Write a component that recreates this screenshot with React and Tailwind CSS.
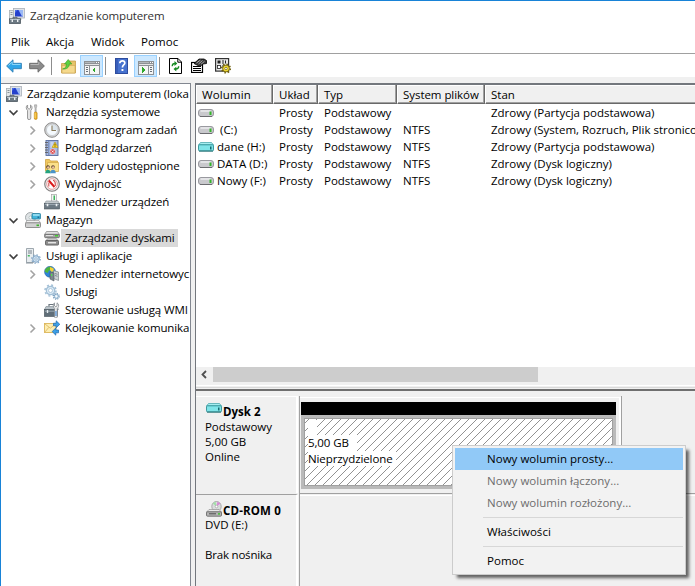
function ComputerIcon() {
  return (
    <svg width="16" height="16" viewBox="0 0 16 16" className="shrink-0">
      <rect x=".5" y="2.500" width="5" height="9" fill="#e2e6e8" stroke="#a7aeb3" strokeWidth=".8" />
      <path d="M1.500 4.500h2M1.500 6.500h2" stroke="#7f898f" strokeWidth=".9" />
      <rect x="4.500" y=".5" width="11" height="9.500" fill="#dfe3e8" stroke="#aab0b8" strokeWidth=".8" />
      <rect x="6" y="2" width="8" height="6.500" fill="#2440cc" />
      <path d="M9.500 2H14v6.500h-1z" fill="#9ab8f5" />
      <path d="M6 2h2.500L6 5z" fill="#4a6ee8" />
      <path d="M8.500 10h3.500l1 1.500H8z" fill="#b3babf" />
      <path d="M4 10.500V9.300h4v1.200" fill="none" stroke="#59656e" />
      <rect x=".5" y="10.800" width="11" height="4.700" fill="#6c7983" stroke="#4c5860" strokeWidth=".8" />
      <path d="M1 11.500h10" stroke="#b2bec6" />
      <path d="M3.300 11.500v2.500M8.700 11.500v2.500" stroke="#edf1f3" strokeWidth="1.400" />
    </svg>
  )
}

function ToolsIcon() {
  return (
    <svg width="16" height="16" viewBox="0 0 16 16">
      <path d="M2.600 1v3l1.500 1.200L5.500 4V1C7 1.800 7.400 3.500 6.800 5L5.800 6.500V14a1.600 1.600 0 0 1-3.300 0V6.500C1 5 .6 2.200 2.600 1z" fill="#e4e4e4" stroke="#858585" strokeWidth=".8" />
      <path d="M9.500.8h2.200v2L11.200 4v4.500H10V4l-.5-1.200z" fill="#c2c2c2" stroke="#8d8d8d" strokeWidth=".5" />
      <rect x="9.300" y="8" width="2.800" height="7.400" rx="1.200" fill="#f0b429" stroke="#b47c10" strokeWidth=".6" />
      <path d="M10.100 9v5" stroke="#ffe28a" strokeWidth=".7" />
    </svg>
  )
}

function ClockIcon() {
  return (
    <svg width="16" height="16" viewBox="0 0 16 16">
      <circle cx="8" cy="8" r="7.300" fill="#d4d4d4" stroke="#8c8c8c" strokeWidth="1" />
      <circle cx="8" cy="8" r="5.500" fill="#f4f9fd" stroke="#b4bbc0" strokeWidth=".5" />
      <path d="M8 8V2.600A5.400 5.400 0 0 1 13.400 8z" fill="#dbe5ec" />
      <path d="M8 3.500v5h4" fill="none" stroke="#8a7a58" strokeWidth="1.100" />
    </svg>
  )
}

function EventIcon() {
  return (
    <svg width="16" height="16" viewBox="0 0 16 16">
      <rect x="2" y=".5" width="12" height="15" fill="#a9bbe0" stroke="#5a6e9f" strokeWidth=".9" />
      <path d="M4.800 1v14" stroke="#6d82b6" />
      <path d="M1 2.500h3M1 5h3M1 7.500h3M1 10h3M1 12.500h3" stroke="#606060" strokeWidth=".9" />
      <path d="M6.500 3h3M6.500 5h2.500M6.500 7h2" stroke="#e6edfb" />
      <path d="M11 2l3 5.500H8z" fill="#ffd92e" stroke="#b08d0a" strokeWidth=".5" />
      <path d="M11 3.700v2M11 6.200v.7" stroke="#5b4700" strokeWidth=".9" />
      <circle cx="8.700" cy="11.500" r="2.700" fill="#d9474c" stroke="#fff" strokeWidth=".5" />
      <path d="M7.700 10.500l2 2M9.700 10.500l-2 2" stroke="#fff" strokeWidth=".9" />
    </svg>
  )
}

function SharedFolderIcon() {
  return (
    <svg width="16" height="16" viewBox="0 0 16 16">
      <path d="M1.500 1.500h4l1 1.500h7v10h-12z" fill="#f0c961" stroke="#cfa245" strokeWidth=".8" />
      <path d="M3.500 4.500h11v9h-11z" fill="#fbe08a" stroke="#d1a748" strokeWidth=".7" />
      <circle cx="4" cy="9" r="1.800" fill="#4a3a2c" />
      <circle cx="9" cy="9" r="1.800" fill="#5a4232" />
      <circle cx="4.200" cy="9.500" r="1.200" fill="#edc19c" />
      <circle cx="9.200" cy="9.500" r="1.200" fill="#edc19c" />
      <path d="M1.200 15.200c0-4.500 5.400-4.500 5.400 0z" fill="#25a37f" />
      <path d="M6.200 15.200c0-4.500 5.600-4.500 5.600 0z" fill="#4b93c8" />
    </svg>
  )
}

function GaugeIcon() {
  return (
    <svg width="16" height="16" viewBox="0 0 16 16">
      <circle cx="8" cy="8" r="7.300" fill="#eee" stroke="#807d7d" strokeWidth="1.100" />
      <circle cx="8" cy="8" r="5.300" fill="#fff" stroke="#e08a8a" strokeWidth=".8" />
      <path d="M4.800 10.500V6.500M9 4.300c1.600.3 2.300 1.800 2.300 3.700v2" fill="none" stroke="#d05050" strokeWidth="1.100" />
      <path d="M4.800 4.500l5.700 6.500" stroke="#db1b1b" strokeWidth="2" />
    </svg>
  )
}

function DeviceIcon() {
  return (
    <svg width="16" height="16" viewBox="0 0 16 16">
      <rect x="7.500" y=".5" width="5" height="7" fill="#f5f5f5" stroke="#a4a4a4" strokeWidth=".7" />
      <rect x="9.500" y="1.500" width="1.500" height="4.500" fill="#3cb45c" />
      <path d="M2 7h12l1.500 2.500H.5z" fill="#c4cace" stroke="#8a9298" strokeWidth=".6" />
      <rect x=".4" y="9.500" width="15.200" height="5.500" fill="#6b7882" stroke="#4a555d" strokeWidth=".6" />
      <path d="M1 10.300h14" stroke="#a4b0b9" />
      <path d="M3.500 9.800v2.500M12.500 9.800v2.500" stroke="#eef2f4" strokeWidth="1.600" />
    </svg>
  )
}

function StorageIcon() {
  return (
    <svg width="16" height="16" viewBox="0 0 16 16">
      <circle cx="5.500" cy="5.500" r="5" fill="#dfe3e5" stroke="#909799" strokeWidth=".8" />
      <circle cx="5.500" cy="5.500" r="1.500" fill="#fff" stroke="#9aa" strokeWidth=".6" />
      <rect x="7" y="1.500" width="8.600" height="5.500" rx="1" fill="#44b7dc" stroke="#237b9b" strokeWidth=".8" />
      <path d="M8 3h6.500" stroke="#c2f0fb" strokeWidth="1.200" />
      <rect x="12.500" y="4.600" width="1.800" height="1.200" fill="#1f577f" />
      <path d="M2 8.500h12l1.500 2.500H.5z" fill="#f0f0f0" stroke="#8f8f8f" strokeWidth=".6" />
      <rect x=".5" y="10.800" width="15" height="4.700" rx="1" fill="#d0d0d0" stroke="#7a7a7a" strokeWidth=".8" />
      <rect x="11.500" y="12.500" width="2.500" height="1.600" fill="#3cb32d" />
    </svg>
  )
}

function DiskManagementIcon() {
  return (
    <svg width="16" height="16" viewBox="0 0 16 16">
      <path d="M2.500 1.500h11l2 3H.5z" fill="#e2e2e2" stroke="#808080" strokeWidth=".7" />
      <rect x=".6" y="4.300" width="14.800" height="3.400" rx="1" fill="#a4a4a4" stroke="#626262" strokeWidth=".8" />
      <path d="M2 5.500h7" stroke="#e6e6e6" strokeWidth=".9" />
      <rect x="11" y="5" width="3" height="1.500" fill="#43cf31" />
      <path d="M3.500 8.800h9l1.500 2H2z" fill="#dedede" stroke="#7a7a7a" strokeWidth=".7" />
      <rect x="1.500" y="10.500" width="13" height="4.600" rx=".8" fill="#8e8e8e" stroke="#565656" strokeWidth=".8" />
      <rect x="4" y="12" width="8" height="1.400" fill="#e6e6e6" />
    </svg>
  )
}

function ServicesAppsIcon() {
  return (
    <svg width="16" height="16" viewBox="0 0 16 16">
      <path d="M1.500.5h7v14h-7z" fill="#e7ecef" stroke="#89949c" strokeWidth=".8" />
      <path d="M3 3h4M3 5h4" stroke="#6f7c85" strokeWidth=".9" />
      <rect x="2.800" y="7" width="2" height="1.500" fill="#43b65c" />
      <path d="M1 15h7" stroke="#89949c" />
      <circle cx="11" cy="11" r="3.300" fill="#cfe3f3" stroke="#7fa3c4" strokeWidth="1" />
      <circle cx="11" cy="11" r="4.300" fill="none" stroke="#7fa3c4" strokeWidth="1.100" strokeDasharray="1.500 1.870" />
      <circle cx="11" cy="11" r="1.200" fill="#fff" stroke="#7fa3c4" strokeWidth=".7" />
    </svg>
  )
}

function IisIcon() {
  return (
    <svg width="16" height="16" viewBox="0 0 16 16">
      <circle cx="6" cy="5.800" r="5.500" fill="#2d84d8" stroke="#22588f" strokeWidth=".5" />
      <path d="M1 4c1.500-3 5-3.500 6.500-3L6.500 4 4.500 5 4 7 1 6z" fill="#4eb53c" />
      <path d="M6 1l3.500 1.200L10 5 7.500 6 6 4z" fill="#f2d334" />
      <path d="M9.500 4.500l5 1.500v8.500l-5-2z" fill="#ccd1d4" stroke="#7b8388" strokeWidth=".7" />
      <path d="M6 5.800l4 1.200v8l-4-2z" fill="#7d888f" stroke="#4f585e" strokeWidth=".6" />
      <path d="M11 7.500l2.500.8M11 9.500l2.500.8" stroke="#6c767d" strokeWidth=".8" />
      <rect x="7" y="8" width="1.200" height="2" fill="#4ee04e" />
    </svg>
  )
}

function GearsIcon() {
  return (
    <svg width="16" height="16" viewBox="0 0 16 16">
      <circle cx="6.500" cy="6.500" r="4.200" fill="#dcebf6" stroke="#a2bfd6" strokeWidth="1.200" />
      <circle cx="6.500" cy="6.500" r="5.500" fill="none" stroke="#a2bfd6" strokeWidth="1.500" strokeDasharray="2 2.320" />
      <circle cx="6.500" cy="6.500" r="2" fill="#fff" stroke="#a2bfd6" strokeWidth=".8" />
      <circle cx="12.300" cy="12.300" r="2.100" fill="#d8e9f5" stroke="#7ba0c0" strokeWidth=".9" />
      <circle cx="12.300" cy="12.300" r="3" fill="none" stroke="#7ba0c0" strokeWidth="1.100" strokeDasharray="1.200 1.160" />
      <circle cx="12.300" cy="12.300" r=".7" fill="#fff" />
    </svg>
  )
}

function WmiIcon() {
  return (
    <svg width="16" height="16" viewBox="0 0 16 16">
      <path d="M5 4.500v-2h5v2" fill="none" stroke="#6a757d" strokeWidth="1.200" />
      <path d="M2 4.500h11l1.500 3H.5z" fill="#b8c1c7" stroke="#7b868d" strokeWidth=".6" />
      <rect x=".4" y="7.500" width="13" height="7" fill="#606e78" stroke="#46525a" strokeWidth=".6" />
      <path d="M1 9.200h12" stroke="#9caab4" />
      <path d="M3.500 8v3" stroke="#e6ecef" strokeWidth="1.400" />
      <path d="M10.500.8v3l1.300 1L13 3.800v-3c1.800 1 2.200 3.200 1 4.800l-.8.900v8.300a1.300 1.300 0 0 1-2.600 0V6.500C8.800 5 8.800 2 10.500.8z" fill="#eee" stroke="#7b8388" strokeWidth=".7" />
      <rect x="11.300" y="9" width="1.300" height="5" fill="#5a96d8" />
    </svg>
  )
}

function QueueIcon() {
  return (
    <svg width="16" height="16" viewBox="0 0 16 16">
      <rect x=".5" y="3.500" width="11.500" height="9" fill="#fdeeb2" stroke="#dcb55a" strokeWidth=".9" />
      <path d="M.8 3.800l5.500 4.400 5.500-4.400M.8 12.200l4-4.800" fill="none" stroke="#dcb55a" strokeWidth=".8" />
      <path d="M9.500 3.200h2.700V.8l3.600 3.500-3.600 3.500V5.800H9.500z" fill="#3ca0e8" stroke="#1967ad" strokeWidth=".7" />
      <path d="M14.500 10h-2.700V7.900l-3.600 3.700 3.600 3.600v-2.400h2.700z" fill="#3ca0e8" stroke="#1967ad" strokeWidth=".7" />
    </svg>
  )
}

function DriveIcon({ teal }) {
  if (teal) {
    return (
      <svg width="16" height="10" viewBox="0 0 16 10" className="shrink-0">
        <path d="M2.500.5h11l2 2.500H.5z" fill="#a6eef0" stroke="#3d9fa5" strokeWidth=".7" />
        <rect x=".5" y="2.800" width="15" height="6" rx="1" fill="#7fe4e8" stroke="#2f8e94" strokeWidth=".9" />
        <path d="M1 9.200h14" stroke="#17666b" strokeWidth=".8" />
        <rect x="12" y="4.500" width="1.500" height="3" fill="#176a70" />
      </svg>
    )
  }
  return (
    <svg width="16" height="10" viewBox="0 0 16 10" className="shrink-0">
      <rect x=".5" y="1.500" width="15" height="7" rx="2.500" fill="#c9c9cd" stroke="#909096" strokeWidth=".9" />
      <path d="M2.500 3h10" stroke="#f5f5f7" strokeWidth="1.200" />
      <path d="M2 8.500h12" stroke="#66666b" strokeWidth=".9" />
      <rect x="11.500" y="3.500" width="2" height="3.500" fill="#34b52a" />
    </svg>
  )
}

function CdIcon() {
  return (
    <svg width="16" height="16" viewBox="0 0 16 16">
      <ellipse cx="10.500" cy="5.500" rx="4.700" ry="5" fill="#d9dcdd" stroke="#9b9b9b" strokeWidth=".8" />
      <path d="M10.500 5.500l1-4.800 3 1.800z" fill="#d986d6" />
      <path d="M10.500 5.500l-3.600-3 2.500-1.700z" fill="#9fe0a4" />
      <circle cx="10.500" cy="5.500" r="1.300" fill="#fff" stroke="#888" strokeWidth=".5" />
      <path d="M3 8.500h10l2.500 2.500H.5z" fill="#e8e8e8" stroke="#868686" strokeWidth=".6" />
      <rect x=".5" y="10.800" width="15" height="4.400" rx="1" fill="#b4b4b4" stroke="#5e5e5e" strokeWidth=".8" />
      <path d="M3 12.800h7" stroke="#4f4f4f" />
      <rect x="12" y="12.200" width="2" height="1.400" fill="#3cc02f" />
    </svg>
  )
}

function Arrow({ right }) {
  return (
    <svg width="16" height="14" viewBox="0 0 16 14">
      {right
        ? <path d="M15.400 7L9 .8v3.500H.6v5.400H9v3.500z" fill="#8b8b8b" stroke="#666" strokeWidth=".9" />
        : <path d="M.6 7L7 .8v3.500h8.400v5.400H7v3.500z" fill="#2fa5e8" stroke="#2f7fb5" strokeWidth=".9" />}
      {right
        ? <path d="M1.500 5.500h8.300V3" fill="none" stroke="#b9b9b9" />
        : <path d="M2.500 6.500L6.200 3v2.500h8.300" fill="none" stroke="#8ad6f9" />}
    </svg>
  )
}

function UpFolderIcon() {
  return (
    <svg width="15" height="16" viewBox="0 0 15 16">
      <path d="M.5 5.500h6l1.500-2.500h6.500v12H.5z" fill="#e6c468" stroke="#c9a04a" strokeWidth=".8" />
      <path d="M1 7.500h13v7.500H1z" fill="#f5d98c" stroke="#cfa955" strokeWidth=".6" />
      <path d="M1.500 11c3-.5 4-2.500 3.900-5H3.500L7.200 1.500 10.800 6H8.300c0 3.500-2.800 5.500-6.800 5z" fill="#5bd03f" stroke="#3a9a28" strokeWidth=".6" />
    </svg>
  )
}

function PaneIcon({ right }) {
  return (
    <svg width="16" height="14" viewBox="0 0 16 14" shapeRendering="crispEdges">
      <rect width="16" height="14" fill="#8d9195" />
      <rect x="1" y="1" width="10" height="1" fill="#b4b8bb" />
      <rect x="12" y="1" width="1" height="1" fill="#fff" />
      <rect x="14" y="1" width="1" height="1" fill="#fff" />
      <rect x="1" y="3" width="14" height="1" fill="#e4e4e4" />
      <rect x="1" y="5" width={right ? 9 : 4} height="8" fill="#f6f6f6" />
      <rect x={right ? 11 : 6} y="5" width={right ? 4 : 9} height="8" fill="#f6f6f6" />
      <path d={right ? 'M12 6h2v1h-2zM12 8h2v1h-2zM12 10h2v1h-2z' : 'M2 6h2v1H2zM2 8h2v1H2zM2 10h2v1H2z'} fill="#687078" />
      <path d={right ? 'M4 6l3 3-3 3z' : 'M11 6L8 9l3 3z'} fill="#2fa82c" />
    </svg>
  )
}

function HelpIcon() {
  return (
    <svg width="13" height="16" viewBox="0 0 13 16">
      <rect x=".5" y=".5" width="12" height="15" fill="#4672cf" stroke="#2d4c9e" />
      <path d="M2 1v14" stroke="#2a4aa5" />
      <path d="M4.800 5.200c0-3.200 5-3 5-.2 0 2-2.400 2-2.400 4.400" fill="none" stroke="#fff" strokeWidth="1.700" />
      <rect x="6.500" y="11" width="1.900" height="2" fill="#fff" />
    </svg>
  )
}

function RefreshIcon() {
  return (
    <svg width="13" height="16" viewBox="0 0 13 16">
      <path d="M.5.500h8.500l3.500 3.500v11.500H.5z" fill="#fff" stroke="#000" />
      <path d="M8.800.500v3.700h3.700" fill="none" stroke="#000" />
      <path d="M3.200 8.200c0-2 .8-2.700 2.800-2.700" fill="none" stroke="#168a22" strokeWidth="1.300" />
      <path d="M5.500 3l2.800 2.500L5.500 8zM7.300 8.700l-2.800 2.300 2.800 2.500z" fill="#168a22" />
      <path d="M9.700 8.200c0 2-.8 2.800-2.800 2.800" fill="none" stroke="#168a22" strokeWidth="1.300" />
    </svg>
  )
}

function PropertiesIcon() {
  return (
    <svg width="16" height="15" viewBox="0 0 16 15">
      <rect x=".5" y="4.500" width="11" height="10" fill="#fff" stroke="#000" strokeWidth="1.200" />
      <path d="M2 8.500h8M2 10.500h8M2 12.500h8" stroke="#000" strokeWidth="1.100" />
      <path d="M3 5.500L8 1h5l2.500 1.500v3L12 6l-3 2.500L6 7z" fill="#3a3a3a" stroke="#000" strokeWidth=".8" />
      <path d="M5.500 5l4-3M7.500 6l4-3.500M10 6.300l3.500-3" stroke="#d6d6d6" strokeWidth=".7" />
    </svg>
  )
}

function SettingsIcon() {
  return (
    <svg width="17" height="16" viewBox="0 0 17 16">
      <rect x=".6" y=".6" width="13" height="12.500" fill="#e9e9e9" stroke="#333" strokeWidth="1.200" />
      <rect x="2.500" y="2.500" width="3" height="3" fill="#222" />
      <rect x="2.500" y="7.500" width="3" height="3" fill="#fff" stroke="#222" strokeWidth=".8" />
      <path d="M7 3h2M10.500 2.500v3M7 5h2M7 8h2" stroke="#222" />
      <circle cx="11" cy="10.500" r="3.400" fill="#f0da36" stroke="#574800" strokeWidth=".7" />
      <circle cx="11" cy="10.500" r="4.300" fill="none" stroke="#6b5b06" strokeWidth="1.500" strokeDasharray="1.500 1.870" />
      <circle cx="11" cy="10.500" r="1.200" fill="#fff" stroke="#574800" strokeWidth=".6" />
    </svg>
  )
}

function Chevron({ open }) {
  return (
    <svg width="11" height="11" viewBox="0 0 11 11" className="shrink-0">
      {open
        ? <path d="M1.500 3.500l4 4 4-4" fill="none" stroke="#404040" strokeWidth="1.700" />
        : <path d="M3.500 1.500l4 4-4 4" fill="none" stroke="#a3a3a3" strokeWidth="1.600" />}
    </svg>
  )
}

const tree = [
  { label: 'Narzędzia systemowe', level: 1, open: true, icon: ToolsIcon },
  { label: 'Harmonogram zadań', level: 2, arrow: true, icon: ClockIcon },
  { label: 'Podgląd zdarzeń', level: 2, arrow: true, icon: EventIcon },
  { label: 'Foldery udostępnione', level: 2, arrow: true, icon: SharedFolderIcon },
  { label: 'Wydajność', level: 2, arrow: true, icon: GaugeIcon },
  { label: 'Menedżer urządzeń', level: 2, icon: DeviceIcon },
  { label: 'Magazyn', level: 1, open: true, icon: StorageIcon },
  { label: 'Zarządzanie dyskami', level: 2, selected: true, icon: DiskManagementIcon },
  { label: 'Usługi i aplikacje', level: 1, open: true, icon: ServicesAppsIcon },
  { label: 'Menedżer internetowyc', level: 2, arrow: true, icon: IisIcon },
  { label: 'Usługi', level: 2, icon: GearsIcon },
  { label: 'Sterowanie usługą WMI', level: 2, icon: WmiIcon },
  { label: 'Kolejkowanie komunika', level: 2, arrow: true, icon: QueueIcon },
]

const volumes = [
  { name: '', fs: '', status: 'Zdrowy (Partycja podstawowa)' },
  { name: '\u00a0(C:)', fs: 'NTFS', status: 'Zdrowy (System, Rozruch, Plik stronico' },
  { name: 'dane (H:)', fs: 'NTFS', status: 'Zdrowy (Partycja podstawowa)', teal: true },
  { name: 'DATA (D:)', fs: 'NTFS', status: 'Zdrowy (Dysk logiczny)' },
  { name: 'Nowy (F:)', fs: 'NTFS', status: 'Zdrowy (Dysk logiczny)' },
]

function TreeRow({ item }) {
  const Icon = item.icon
  return (
    <div className={item.level === 1 ? 'flex h-[18px] items-center pl-[7px]' : 'flex h-[18px] items-center pl-[26px]'}>
      <span className="w-[17px] shrink-0">
        {(item.open || item.arrow) && <Chevron open={item.open} />}
      </span>
      <span className="shrink-0"><Icon /></span>
      <span className={item.selected ? 'ml-px h-[18px] bg-[#d9d9d9] pl-1 pr-1' : 'pl-[5px]'}>{item.label}</span>
    </div>
  )
}

function HeaderCell({ className, children }) {
  return (
    <div className={`h-[19px] shrink-0 border-b border-l border-r border-b-[#696969] border-l-white border-r-[#696969] pl-[5px] shadow-[inset_-1px_-1px_0_#a0a0a0,inset_0_1px_0_#fff] leading-[19px] ${className}`}>
      {children}
    </div>
  )
}

function VolumeList() {
  return (
    <div className="h-[282px] shrink-0 overflow-hidden bg-white">
      <div className="flex bg-[#f0f0f0]">
        <HeaderCell className="w-[77px] tracking-[0.1px]">Wolumin</HeaderCell>
        <HeaderCell className="w-[45px]">Układ</HeaderCell>
        <HeaderCell className="w-[79px]">Typ</HeaderCell>
        <HeaderCell className="w-[88px] tracking-[-0.05px]">System plików</HeaderCell>
        <HeaderCell className="w-[240px]">Stan</HeaderCell>
      </div>
      {volumes.map((v, i) => (
        <div key={i} className="flex h-[17px] items-center whitespace-nowrap leading-[17px]">
          <span className="flex w-[83px] shrink-0 items-center gap-[3px] pl-[2px]">
            <DriveIcon teal={v.teal} />
            <span>{v.name}</span>
          </span>
          <span className="w-[45px] shrink-0">Prosty</span>
          <span className="w-[79px] shrink-0">Podstawowy</span>
          <span className="w-[88px] shrink-0">{v.fs}</span>
          <span>{v.status}</span>
        </div>
      ))}
    </div>
  )
}

function DiskGraph() {
  return (
    <div className="flex h-[97px] shrink-0">
      <div className="w-[102px] border-r-2 border-t border-white pl-[9px] pt-[6px] leading-[15px]">
        <div className="flex h-[15px] items-start pl-px">
          <DriveIcon teal />
          <b className="pl-px pt-px">Dysk 2</b>
        </div>
        <div className="pt-px tracking-[-0.05px]">
          <p>Podstawowy</p>
          <p>5,00 GB</p>
          <p>Online</p>
        </div>
      </div>
      <div className="ml-px w-[323px] border-l border-r border-[#a0a0a0] pt-px">
        <div className="h-full border-t border-r-2 border-white pl-px pt-[4px]">
          <div className="h-[13px] w-[315px] bg-black" />
          <div className="h-[74px] w-[315px] border-[3px] border-[#bababa]">
            <div className="relative h-[68px] border border-[#a0a0a0] bg-white">
              <svg className="absolute inset-0 h-full w-full" shapeRendering="crispEdges">
                <defs>
                  <pattern id="hatch" width="8" height="8" patternUnits="userSpaceOnUse">
                    <path d="M3 0h1v1H3zM2 1h1v1H2zM1 2h1v1H1zM0 3h1v1H0zM7 4h1v1H7zM6 5h1v1H6zM5 6h1v1H5zM4 7h1v1H4z" fill="#929292" />
                  </pattern>
                </defs>
                <rect width="100%" height="100%" fill="url(#hatch)" />
              </svg>
              <div className="relative flex flex-col items-start pl-[3px] pt-px leading-[15px]">
                <span className="h-[15px] w-[9px] bg-white" />
                <span className="bg-white pb-px pr-2 tracking-[-0.1px]">5,00 GB</span>
                <span className="bg-white pr-[3px] tracking-[-0.1px]">Nieprzydzielone</span>
              </div>
            </div>
          </div>
        </div>
      </div>
    </div>
  )
}

function ContextMenu() {
  return (
    <div className="absolute left-[451px] top-[444px] h-[130px] w-[234px] border border-[#ccc] bg-[#f2f2f2] p-[2px] text-[11.5px] tracking-[0.03px] leading-[22px] shadow-[4px_4px_3px_-1px_rgba(0,0,0,0.6)]">
      <div className="bg-[#91c9f7] pl-8">Nowy wolumin prosty...</div>
      <div className="pl-8 text-[#6d6d6d]">Nowy wolumin łączony...</div>
      <div className="pl-8 text-[#6d6d6d]">Nowy wolumin rozłożony...</div>
      <div className="my-[3px] ml-7 h-px bg-[#d7d7d7]" />
      <div className="pl-8">Właściwości</div>
      <div className="my-[3px] ml-7 h-px bg-[#d7d7d7]" />
      <div className="pl-8">Pomoc</div>
    </div>
  )
}

export default function App() {
  return (
    <div className="relative flex h-[586px] w-[695px] flex-col overflow-hidden border-l border-t border-[#1883d7] bg-[#f0f0f0] font-['Open_Sans',sans-serif] text-[11.5px] text-black">
      <header className="bg-white">
        <div className="flex h-[30px] items-center pl-2 text-[#333]">
          <ComputerIcon />
          <span className="pl-[5px] tracking-[-0.15px]">Zarządzanie komputerem</span>
        </div>
        <nav className="flex h-[22px] items-center pl-[10px]">
          <span className="w-[35px]">Plik</span>
          <span className="w-[45px]">Akcja</span>
          <span className="w-[50px]">Widok</span>
          <span className="tracking-[0.1px]">Pomoc</span>
        </nav>
        <div className="flex h-6 items-center border-t border-[#a0a0a0] pl-[5px]">
          <Arrow />
          <span className="ml-[7px]"><Arrow right /></span>
          <span className="ml-[6px] h-[18px] w-px bg-[#8d8d8d]" />
          <span className="ml-[9px]"><UpFolderIcon /></span>
          <span className="ml-[4px] flex h-[22px] w-[23px] items-center justify-center border border-[#99d1ff] bg-[#cce8ff] pt-1"><PaneIcon /></span>
          <span className="ml-[2px] h-[18px] w-px bg-[#8d8d8d]" />
          <span className="ml-[9px]"><HelpIcon /></span>
          <span className="ml-[6px] flex h-[22px] w-[23px] items-center justify-center border border-[#99d1ff] bg-[#cce8ff] pt-1"><PaneIcon right /></span>
          <span className="ml-[2px] h-[18px] w-px bg-[#8d8d8d]" />
          <span className="ml-[9px]"><RefreshIcon /></span>
          <span className="ml-[9px]"><PropertiesIcon /></span>
          <span className="ml-2"><SettingsIcon /></span>
        </div>
      </header>

      <div className="flex min-h-0 flex-1 pt-[6px]">
        <aside className="w-[190px] shrink-0 border-r border-t border-[#828790] bg-white pt-px">
          <div className="whitespace-nowrap leading-[18px] tracking-[-0.13px]">
            <div className="flex h-[18px] items-center pl-[5px]">
              <ComputerIcon />
              <span className="pl-[5px] tracking-[-0.17px]">Zarządzanie komputerem (loka</span>
            </div>
            {tree.map((item) => <TreeRow key={item.label} item={item} />)}
          </div>
        </aside>

        <main className="ml-1 flex min-w-0 flex-1 flex-col overflow-hidden border-l border-t-2 border-[#73777d]">
          <VolumeList />
          <div className="flex h-[15px] shrink-0">
            <svg width="17" height="15" viewBox="0 0 17 15">
              <path d="M10 4L6.500 7.500 10 11" fill="none" stroke="#505050" strokeWidth="1.800" />
            </svg>
            <div className="w-[325px] bg-[#cdcdcd]" />
          </div>
          <div className="h-[9px] shrink-0 border-b-2 border-[#6f6f6f] pt-[3px]">
            <div className="h-[3px] border-b border-t border-[#fff] border-b-[#d9d9d9]" />
          </div>
          <div className="h-[5px] shrink-0" />
          <DiskGraph />
          <div className="flex min-h-0 flex-1">
            <div className="mt-px w-[102px] border-r-2 border-t border-r-white border-t-[#a0a0a0] pl-[9px] pt-[6px] leading-[15px]">
              <div className="flex h-4 items-start pl-px">
                <CdIcon />
                <b className="pl-px pt-[2px] leading-[15px] tracking-[0.15px]">CD-ROM 0</b>
              </div>
              <p>DVD (E:)</p>
              <p className="pt-[15px] tracking-[-0.2px]">Brak nośnika</p>
            </div>
            <div className="ml-px flex-1 border-l border-t border-[#a0a0a0] pt-px">
              <div className="h-full border-t border-white" />
            </div>
          </div>
        </main>
      </div>
      <ContextMenu />
    </div>
  )
}
